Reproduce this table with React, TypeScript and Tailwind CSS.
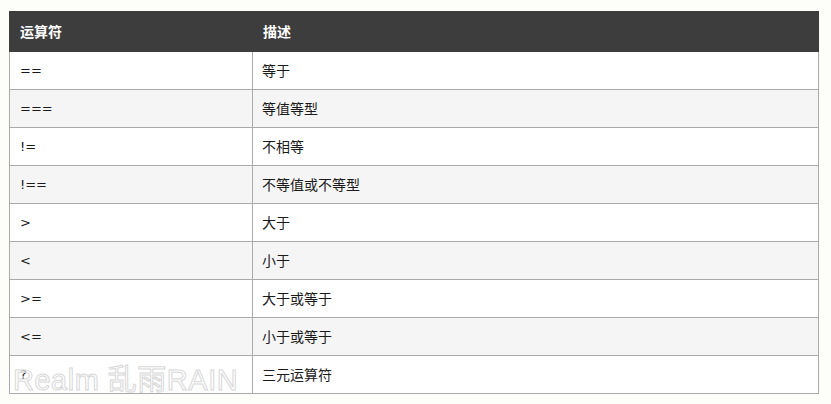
import React from "react";

const rows: [string, string][] = [
  ["==", "等于"],
  ["===", "等值等型"],
  ["!=", "不相等"],
  ["!==", "不等值或不等型"],
  [">", "大于"],
  ["<", "小于"],
  [">=", "大于或等于"],
  ["<=", "小于或等于"],
  ["?", "三元运算符"],
];

export default function App() {
  return (
    <div
      className="relative w-[831px] h-[404px] bg-[#fdfdf9] pt-[11px] pl-[9px] text-[14px] text-[#1a1a1a]"
      style={{ fontFamily: '"Noto Sans CJK SC", "Noto Sans", sans-serif' }}
    >
      <div className="w-[810px]">
        <div className="flex h-[41px] items-center bg-[#3d3d3d] text-white font-bold">
          <div className="w-[244px] pl-[11px]">运算符</div>
          <div className="flex-1 pl-[10px]">描述</div>
        </div>
        <div className="border-x border-[#aaaaaa]">
          {rows.map(([op, desc], i) => (
            <div
              key={i}
              className={`flex h-[38px] border-b border-[#aaaaaa] ${
                i % 2 === 1 ? "bg-[#f5f5f5]" : "bg-white"
              }`}
            >
              <div
                className="w-[243px] pl-[10px] flex items-center border-r border-[#aaaaaa] text-[13px]"
                style={{ fontFamily: '"DejaVu Sans", sans-serif' }}
              >
                {op}
              </div>
              <div className="flex-1 pl-[9px] flex items-center">{desc}</div>
            </div>
          ))}
        </div>
      </div>
      <div
        className="absolute left-[13px] top-[362px] text-[29px] leading-[36px] text-white/50 tracking-[0.5px] [-webkit-text-stroke:1px_#d8d8d8] pointer-events-none"
        style={{ fontFamily: '"Liberation Sans", "Noto Sans CJK SC", sans-serif' }}
      >
        Realm 乱雨RAIN
      </div>
    </div>
  );
}
